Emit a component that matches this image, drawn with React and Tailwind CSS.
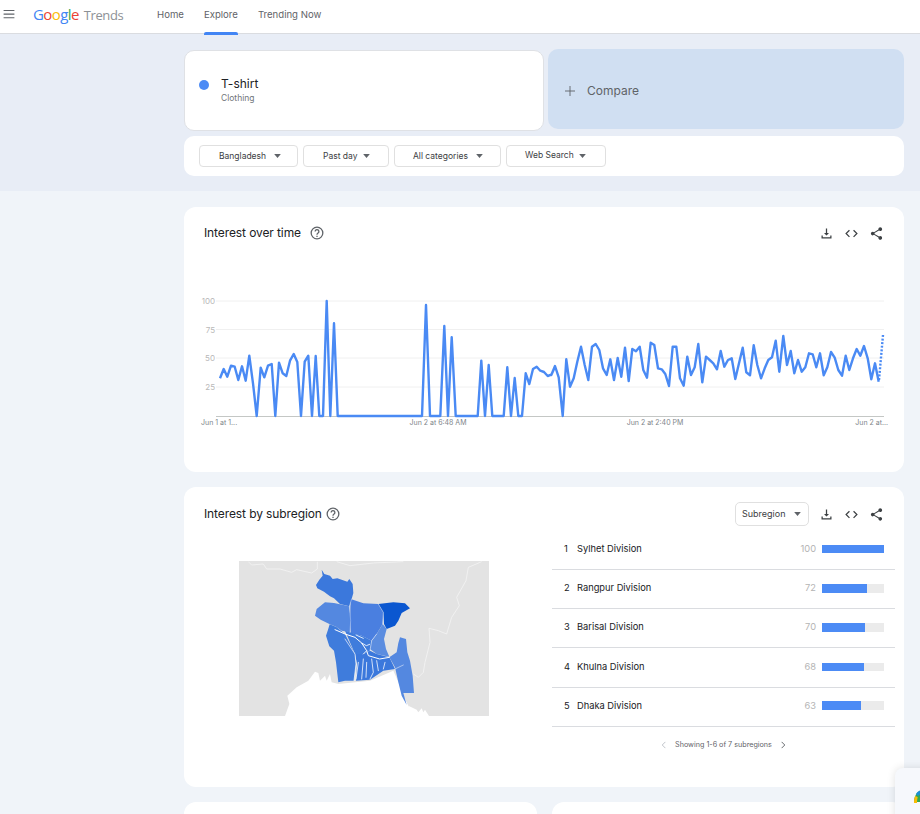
import React from "react";

const SANS = "font-['Inter','Liberation_Sans',sans-serif]";

const A = [[90,265],[101,237],[112,260],[123,227],[134,230],[145,270],[156,229],[167,272],[178,197],[189,280],[200,378],[212,233],[223,262],[234,227],[245,222],[256,378],[267,218],[278,250],[289,258],[300,212],[311,192],[322,216],[333,378],[344,215],[355,197],[366,378],[377,198],[388,378],[399,378],[410,33],[421,378],[432,100],[443,378],[696,378],[708,45],[720,378],[751,378],[763,108],[774,378],[785,142],[797,378],[863,378],[874,212],[885,378],[896,225],[907,378],[941,378],[952,232],[963,378],[974,264],[985,378],[996,378],[1007,250],[1018,282],[1029,237],[1040,230],[1051,242],[1062,246],[1073,258],[1084,254],[1095,230]];
const B = [[4,255],[15,228],[26,262],[38,378],[49,208],[60,290],[71,265],[82,215],[93,170],[104,225],[115,270],[126,170],[137,162],[148,180],[159,235],[170,255],[181,208],[192,270],[203,204],[214,260],[225,173],[236,273],[247,177],[258,184],[269,170],[280,240],[291,263],[302,158],[313,165],[324,235],[335,238],[346,252],[357,288],[368,170],[379,170],[390,265],[401,287],[412,200],[423,255],[434,232],[445,162],[457,277],[468,200],[479,210],[490,220],[501,238],[512,183],[523,230],[534,210],[545,205],[556,267],[567,220],[578,173],[589,247],[600,256],[611,166],[622,225],[633,265],[644,235],[655,210],[666,202],[677,152],[688,245],[700,138],[711,225],[722,183],[733,250],[744,210],[755,245],[766,232],[777,190],[788,193],[799,232],[810,190],[821,256],[832,232],[843,186],[854,203],[865,240],[876,257],[887,197],[898,240],[909,205],[920,177],[931,197],[942,168],[953,205],[964,268],[975,220],[986,275]];
const toPx = (p, ox) => `${(ox + p[0] / 3).toFixed(1)},${(290 + p[1] / 3).toFixed(1)}`;
const linePts = [...A.map((p) => toPx(p, 190)), ...B.map((p) => toPx(p, 550))].join(" ");

const rows = [
  ["1", "Sylhet Division", "100", 62, "h-2", "h-[40px] pb-[2px]"],
  ["2", "Rangpur Division", "72", 45, "h-[9px]", "h-[39px] pb-[2px]"],
  ["3", "Barisal Division", "70", 43, "h-[9px]", "h-[39px] pb-[2px]"],
  ["4", "Khulna Division", "68", 42, "h-2", "h-[39.5px]"],
  ["5", "Dhaka Division", "63", 39, "h-[9px]", "h-[39px] pb-[2px]"],
];

function Caret({ className = "" }) {
  return (
    <svg viewBox="0 0 10 6" className={`w-[7px] h-[4px] ${className}`} fill="#5f6368">
      <path d="M0 0h10L5 6z" />
    </svg>
  );
}

function Filter({ label, w, pl, gap, up }) {
  return (
    <div className={`${w} ${pl} ${gap} h-[22px] border border-[#e0e0e0] rounded-[4px] flex items-center text-[8.5px] text-[#3c4043]`}>
      <span className={up ? "-translate-y-[1px]" : ""}>{label}</span>
      <Caret />
    </div>
  );
}

function Icon({ d, className = "" }) {
  return (
    <svg viewBox="0 0 24 24" className={`w-[15px] h-[15px] ${className}`} fill="#3c4043">
      <path d={d} />
    </svg>
  );
}

function Actions() {
  return (
    <div className="flex items-center gap-[10px]">
      <Icon d="M18 15v3H6v-3H4v5h16v-5zM16 11h-3V4h-2v7H8l4 4z" />
      <Icon d="M9.4 16.6L4.8 12l4.6-4.6L8 6l-6 6 6 6 1.4-1.4zm5.2 0l4.6-4.6-4.6-4.6L16 6l6 6-6 6-1.4-1.4z" />
      <Icon d="M18 16.08c-.76 0-1.44.3-1.96.77L8.91 12.7c.05-.23.09-.46.09-.7s-.04-.47-.09-.7l7.05-4.11c.54.5 1.25.81 2.04.81 1.66 0 3-1.34 3-3s-1.34-3-3-3-3 1.34-3 3c0 .24.04.47.09.7L8.04 9.81C7.5 9.31 6.79 9 6 9c-1.66 0-3 1.34-3 3s1.34 3 3 3c.79 0 1.5-.31 2.04-.81l7.12 4.16c-.05.21-.08.43-.08.65 0 1.61 1.31 2.92 2.92 2.92 1.61 0 2.92-1.31 2.92-2.92s-1.31-2.92-2.92-2.92z" />
    </div>
  );
}

function Help() {
  return (
    <svg viewBox="0 0 24 24" className="w-[14px] h-[14px]" fill="none" stroke="#5f6368" strokeWidth="2.2">
      <circle cx="12" cy="12" r="10" />
      <path d="M8.8 9.4a3.2 3.2 0 1 1 5 2.7c-1.2.8-1.8 1.4-1.8 2.9" />
      <path d="M12 16.6v2.2" />
    </svg>
  );
}

function Chart() {
  const grid = [[301, "100"], [329.5, "75"], [358, "50"], [387, "25"]];
  return (
    <svg viewBox="184 280 720 160" className="w-[720px] h-[160px] block">
      {grid.map(([y, l]) => (
        <g key={l}>
          <line x1="216" x2="884" y1={y} y2={y} stroke="#f0f0f0" strokeWidth="1" />
          <text x="215" y={y + 3} textAnchor="end" fontSize="8" fill="#b8b8b8" fontFamily="Inter, sans-serif">{l}</text>
        </g>
      ))}
      <line x1="216" x2="884" y1="416.5" y2="416.5" stroke="#c4c7c5" strokeWidth="1" />
      {[[201, "start", "Jun 1 at 1..."], [438, "middle", "Jun 2 at 6:48 AM"], [655, "middle", "Jun 2 at 2:40 PM"], [888, "end", "Jun 2 at..."]].map(([x, a, t]) => (
        <text key={t} x={x} y="425" textAnchor={a} fontSize="7" fill="#80868b" fontFamily="Inter, sans-serif">{t}</text>
      ))}
      <polyline points={linePts} fill="none" stroke="#4a8af4" strokeWidth="2.4" strokeLinejoin="round" />
      <line x1="879" y1="380" x2="883" y2="335" stroke="#4a8af4" strokeWidth="2.4" strokeDasharray="2 1.6" />
    </svg>
  );
}

function BdMap() {
  return (
    <svg viewBox="27 16 750 465" className="w-[250px] h-[155px] block">
      <rect x="27" y="16" width="750" height="465" fill="#e3e3e3" />
      <g fill="none" stroke="#f3f3f3" strokeWidth="2.5" strokeLinejoin="round">
        <path d="M55 18l10 10 35-3 10 15h40l35 10 15-8 45 10 17-12V18" />
        <path d="M320 18l40 12 70-8 90-4" />
        <path d="M755 18l-40 17-7 40-28 50 8 25-23 35-15 50-25-10-28-7 3 42-15 60-5 30-15 15-15-10" />
      </g>
      <path d="M165 481l13-36-6-25 28-25 35-20 20-27 10 4 5 23 15-15 5 15 10-20 5 25 20 5 95-10 70-30 20 45 10 30 15 30 20 31 H165z" fill="#fff" />
      <path d="M535 450l25 12 5 8 10-12 5 12 5-8 12 19h-52z" fill="#fff" />
      <path d="M275 42l8 13 17 5 8 10 14-2 13 4 17 6 6-8 10 15 2 27-5 18-7 22-28-7-18-17-12-6-18-14-20-10-4-10 10-16 10-12z" fill="#3b78dc" />
      <path d="M285 140l27 2 46 10 4 43-2 35-25-5-17-12-20-8-26-13-17-12 5-20z" fill="#5488e0" />
      <path d="M362 130l38 13 45 2 15 25-2 35-18 30-15 20-30-15-33-8-2-42z" fill="#4a7fe0" />
      <path d="M445 145l45-5 35 3 15 15-25 14-10 23-10 15-25 10-8-15-2-35z" fill="#0b57d0" />
      <path d="M458 205l12 15-8 30 6 30 10 23-38-8-20-15 5-25 15-20z" fill="#5b8de0" />
      <path d="M510 245l18 5 4 40 8 25 8 45 4 52h-32l10 36-15-28-10-40-10-45-17-30 22-15 5-28z" fill="#5488e0" />
      <path d="M288 240l6-18 5-16 20 8 26 21 30 60 3 30-6 50h-27l-20 5-7-60-6-35-14-13z" fill="#3f7cdc" />
      <path d="M345 225l50 15 30 15-5 30-20 10h-25z" fill="#3f7cdc" />
      <path d="M375 295h25l20-10 20 10 38 10 17 35-35 5-40 27-42 3 3-50z" fill="#3b78dc" />
      <g fill="none" stroke="#fff" strokeLinecap="round" strokeLinejoin="round">
        <path d="M365 130l-7 22 4 43-2 35" strokeWidth="1.5" opacity=".65" />
        <path d="M445 145l15 25-2 35" strokeWidth="1.5" opacity=".75" />
        <path d="M315 222l30 13 30 10 20 17 15 23 5 15 34 10 29-5" strokeWidth="3" />
        <path d="M378 238l22 10M395 262l14 8 10-4M410 285l-10 10" strokeWidth="2.5" />
        <path d="M345 250l30 45 3 30-6 50" strokeWidth="2" />
        <path d="M385 320l-7 50M400 310l-5 60M410 320l-2 45M425 310l5 40-10 20M440 315l5 30M465 320l-5 20" strokeWidth="2.3" />
        <path d="M440 235l-15 20-5 30" strokeWidth="1.5" />
        <path d="M495 340l25-12" strokeWidth="1.5" />
      </g>
    </svg>
  );
}

export default function App() {
  return (
    <div className={`${SANS} w-[920px] h-[814px] overflow-hidden relative bg-[#f0f4f9]`}>
      <header className="h-[34px] bg-white border-b border-[#dadce0] flex items-stretch">
        <div className="w-[33px] pl-[3px] flex items-center">
          <svg viewBox="0 0 12 10" className="w-[12px] h-[9px] -mt-[4px]" fill="#5f6368">
            <path d="M0 0h12v1.2H0zM0 4h12v1.2H0zM0 8h12v1.2H0z" />
          </svg>
        </div>
        <div className="w-[124px] flex items-baseline pt-[3px] font-['Open_Sans',sans-serif]">
          <span className="text-[15px] tracking-[-0.6px] text-[#4285f4]">G</span>
          <span className="text-[15px] tracking-[-0.6px] text-[#ea4335]">o</span>
          <span className="text-[15px] tracking-[-0.6px] text-[#fbbc05]">o</span>
          <span className="text-[15px] tracking-[-0.6px] text-[#4285f4]">g</span>
          <span className="text-[15px] tracking-[-0.6px] text-[#34a853]">l</span>
          <span className="text-[15px] tracking-[-0.6px] text-[#ea4335]">e</span>
          <span className="text-[13px] tracking-[-0.4px] text-[#8d9196] ml-[5px]">Trends</span>
        </div>
        <nav className="flex items-stretch gap-[20px] text-[9.6px] text-[#5f6368]">
          <div className="flex items-center -mt-[2px]">Home</div>
          <div className="relative flex items-center -mt-[2px]">
            Explore
            <div className="absolute left-0 right-0 bottom-[-2px] h-[3px] bg-[#4285f4] rounded-t-[2px]" />
          </div>
          <div className="flex items-center -mt-[2px]">Trending Now</div>
        </nav>
      </header>

      <section className="h-[157px] bg-[#e8edf6] pl-[184px] pr-[16px] pt-[16px]">
        <div className="flex gap-[4px] items-start">
          <div className="w-[360px] h-[81px] bg-white border border-[#dfe1e5] rounded-[10px] flex items-center pl-[14px] gap-[12px]">
            <div className="w-[10px] h-[10px] rounded-full bg-[#4c8bf5] -mt-[12px]" />
            <div className="flex flex-col -mt-[2px]">
              <span className="text-[12px] leading-[16px] text-[#202124]">T-shirt</span>
              <span className="text-[8.5px] leading-[12px] text-[#70757a]">Clothing</span>
            </div>
          </div>
          <div className="w-[356px] h-[80px] -mt-[1px] bg-[#d0dff2] rounded-[10px] flex items-center pl-[17px] gap-[12px] text-[#5f6368]">
            <svg viewBox="0 0 10 10" className="w-[10px] h-[10px] mt-[4px]" fill="none" stroke="#5f6368" strokeWidth="0.9">
              <path d="M5 0v10M0 5h10" />
            </svg>
            <span className="text-[12px] mt-[4px]">Compare</span>
          </div>
        </div>
        <div className="mt-[5px] w-[720px] h-[40px] bg-white rounded-[10px] flex items-center pl-[15px] gap-[5px]">
          <Filter label="Bangladesh" w="w-[99px]" pl="pl-[19px]" gap="gap-[8px]" />
          <Filter label="Past day" w="w-[86px]" pl="pl-[19px]" gap="gap-[5px]" />
          <Filter label="All categories" w="w-[107px]" pl="pl-[18px]" gap="gap-[8px]" />
          <Filter label="Web Search" w="w-[100px]" pl="pl-[18px]" gap="gap-[5px]" up />
        </div>
      </section>

      <main className="pl-[184px] pr-[16px] pt-[16px] flex flex-col gap-[15px]">
        <section className="h-[265px] bg-white rounded-[12px]">
          <div className="flex items-center justify-between pt-[3px] pl-[20px] pr-[20px] h-[50px]">
            <div className="flex items-center gap-[9px] -mt-[2px]">
              <span className="text-[12px] text-[#202124] tracking-[-0.1px]">Interest over time</span>
              <Help />
            </div>
            <Actions />
          </div>
          <div className="mt-[23px]">
            <Chart />
          </div>
        </section>

        <section className="h-[300px] bg-white rounded-[12px]">
          <div className="flex items-center justify-between pt-[14px] pl-[20px] pr-[20px] h-[40px]">
            <div className="flex items-center gap-[4px] -mt-[1px]">
              <span className="text-[12px] text-[#202124] tracking-[-0.1px]">Interest by subregion</span>
              <Help />
            </div>
            <div className="flex items-center gap-[10px]">
              <div className="w-[74px] h-[24px] border border-[#e0e0e0] rounded-[5px] flex items-center justify-between px-[6px] text-[9px] text-[#3c4043]">
                <span>Subregion</span>
                <Caret className="w-[6px] mr-[1px]" />
              </div>
              <Actions />
            </div>
          </div>
          <div className="flex mt-[3px]">
            <div className="pl-[55px] pt-[31px] w-[368px]">
              <BdMap />
            </div>
            <div className="w-[343px]">
              {rows.map(([n, name, v, w, h, rh]) => (
                <div key={n} className={`${rh} border-b border-[#dadce0] flex items-center text-[9.3px] text-[#202124]`}>
                  <span className="w-[25px] pl-[12px]">{n}</span>
                  <span className="flex-1">{name}</span>
                  <span className="text-[#b4b4b4] w-[30px] text-right mr-[6px]">{v}</span>
                  <div className={`w-[62px] ${h} bg-[#ebebeb] mr-[11px]`}>
                    <div className="h-full bg-[#4c8bf5]" style={{ width: `${w}px` }} />
                  </div>
                </div>
              ))}
              <div className="flex items-center justify-center gap-[9px] mt-[13px] text-[7.2px] text-[#5f6368]">
                <svg viewBox="0 0 8 12" className="w-[5px] h-[8px]" fill="none" stroke="#bdc1c6" strokeWidth="1.5"><path d="M7 1L2 6l5 5" /></svg>
                <span>Showing 1-6 of 7 subregions</span>
                <svg viewBox="0 0 8 12" className="w-[5px] h-[8px]" fill="none" stroke="#5f6368" strokeWidth="1.5"><path d="M1 1l5 5-5 5" /></svg>
              </div>
            </div>
          </div>
        </section>

        <div className="flex gap-[15px]">
          <section className="w-[353px] h-[60px] bg-white rounded-[12px]" />
          <section className="w-[352px] h-[60px] bg-white rounded-[12px]" />
        </div>
      </main>

      <div className="absolute left-[895px] top-[768px] w-[40px] h-[60px] bg-[#f6f8fc] rounded-tl-[8px] shadow-[0_0_8px_rgba(0,0,0,0.12)]">
        <svg viewBox="0 0 12 14" className="absolute left-[19px] top-[22px] w-[12px] h-[14px]">
          <path d="M0 12C0 6 3 1 8 0v12z" fill="#34a853" />
          <path d="M2 4C3 2 5 .5 8 0v4c-2 0-3 1-4 2z" fill="#1a8fd6" />
          <path d="M0 13c0-3 .4-5 1.200-7l2.500 1c-.5 2-.7 4-.7 6z" fill="#fbbc05" />
        </svg>
      </div>
    </div>
  );
}
